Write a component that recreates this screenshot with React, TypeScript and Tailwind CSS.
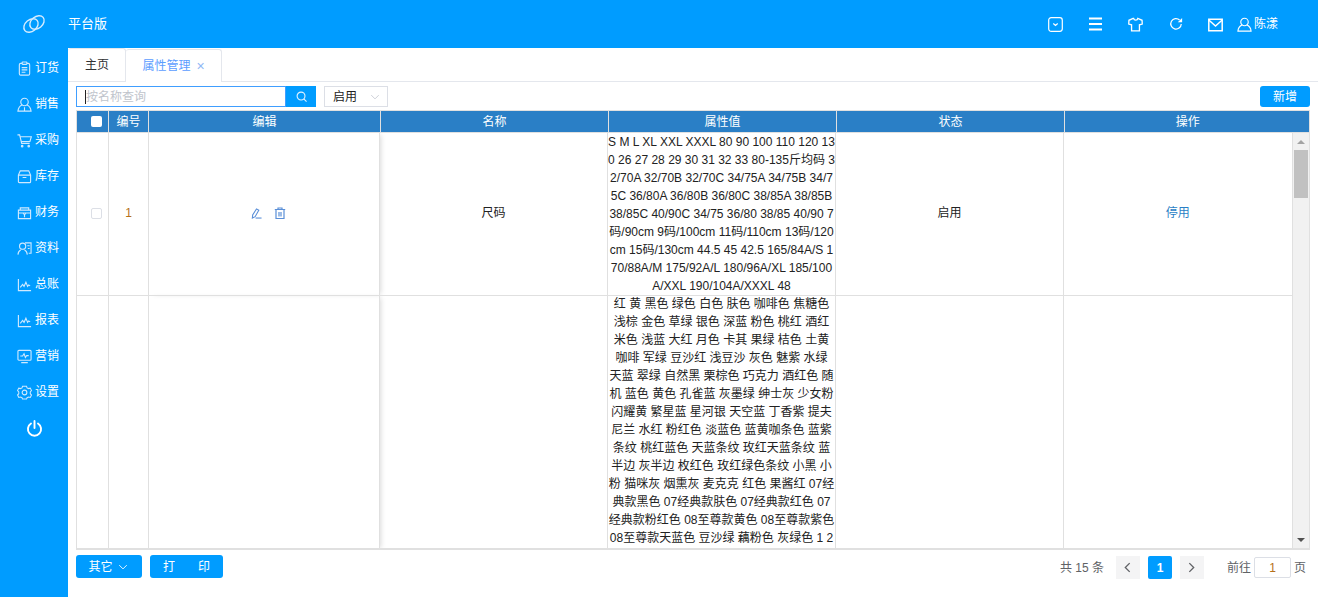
import React from "react";

const FONT = '"Liberation Sans", "Noto Sans CJK SC", sans-serif';

type IconProps = { className?: string };
const S = ({ children, className, box = 16 }: { children: React.ReactNode; className?: string; box?: number }) => (
  <svg viewBox={`0 0 ${box} ${box}`} fill="none" stroke="currentColor" strokeWidth="1.2" className={className}>
    {children}
  </svg>
);

const Order = ({ className }: IconProps) => (
  <S className={className}>
    <rect x="2.500" y="2.500" width="11" height="12.500" rx="1.500" />
    <rect x="5.500" y="1" width="5" height="2.600" rx="0.600" fill="#009cff" />
    <path d="M5 7h6M5 9.500h6M5 12h4" />
  </S>
);
const Person = ({ className }: IconProps) => (
  <S className={className}>
    <circle cx="8" cy="5.300" r="4" />
    <path d="M5.300 8.500C3 9.500 1.500 11 1 15h14c-.5-4-2-5.500-4.300-6.500M8 11v4" />
  </S>
);
const UserTop = ({ className }: IconProps) => (
  <S className={className}>
    <circle cx="8" cy="5.300" r="4" />
    <path d="M5.300 8.500C3 9.500 1.300 11.500 1 15h14c-.3-3.500-2-5.500-4.300-6.500" />
  </S>
);
const Cart = ({ className }: IconProps) => (
  <S className={className}>
    <path d="M0.500 2h2.300l2.200 9h8.500M3.300 4h12l-1.500 5H5" />
    <circle cx="5.500" cy="14" r="0.800" />
    <circle cx="12.500" cy="14" r="0.800" />
  </S>
);
const Box = ({ className }: IconProps) => (
  <S className={className}>
    <path d="M3.500 2h9l2 4.500v7a1 1 0 0 1-1 1h-11a1 1 0 0 1-1-1v-7zM1.500 6.500h13M6 9h4" />
  </S>
);
const Finance = ({ className }: IconProps) => (
  <S className={className}>
    <path d="M3.500 3h9v2.500h-9zM1.500 5.500h13v9h-13zM1.500 8.500h13" />
    <path d="M6.500 8.500 8 10.500l1.500-2M8 10.500V13" />
  </S>
);
const Data = ({ className }: IconProps) => (
  <S className={className}>
    <circle cx="6" cy="5.500" r="3.300" />
    <path d="M1 14.500c.3-3 1.700-4.500 3-5M8 9.500c1.300.500 2.700 2 3 5M8.500 2H15v11h-2.500M11 5h2.500M11.500 8H13.500" />
  </S>
);
const Chart = ({ className }: IconProps) => (
  <S className={className}>
    <path d="M1.500 2v12.500H15" />
    <path d="M3.500 11l2.500-3 1.500 2 2-4.500 1.800 4.500 1.200-1.500 1.500 1" />
  </S>
);
const Screen = ({ className }: IconProps) => (
  <S className={className}>
    <rect x="1" y="1.500" width="14" height="10.500" rx="1" />
    <path d="M3.500 7.500h2.500L7.500 5l1.500 4 1.300-2h2.200M4.500 14.500h7" />
  </S>
);
const Gear = ({ className }: IconProps) => (
  <S className={className}>
    <path d="M5.700 1.500h4.600l.6 1.800 1.800.8 1.900-.5 1.400 2.800-1.400 1.600v2l1.400 1.500-1.400 2.800-1.900-.5-1.800.8-.6 1.400H5.700l-.6-1.400-1.800-.8-1.900.5L0 11.500 1.400 10V8L0 6.400l1.400-2.800 1.900.5 1.800-.8z" transform="translate(0.600 0) scale(0.930)" />
    <circle cx="8" cy="8" r="2.500" />
  </S>
);
const Power = ({ className }: IconProps) => (
  <S className={className}>
    <g strokeWidth="1.800" strokeLinecap="round">
      <path d="M4.700 3.300a6.200 6.200 0 1 0 6.600 0" />
      <path d="M8 1v6.500" />
    </g>
  </S>
);
const Logo = ({ className }: IconProps) => (
  <svg viewBox="0 0 24 20" fill="none" stroke="currentColor" strokeWidth="1.400" className={className}>
    <ellipse cx="9" cy="11.500" rx="8" ry="5.800" transform="rotate(-40 9 11.500)" />
    <ellipse cx="15" cy="8.500" rx="8" ry="5.800" transform="rotate(-40 15 8.500)" />
  </svg>
);
const SmileBox = ({ className }: IconProps) => (
  <S className={className} box={15}>
    <rect x="0.700" y="0.700" width="13.600" height="13.600" rx="2.500" />
    <path d="M5.300 6.500 7.500 8.500 9.700 6.500" />
  </S>
);
const Menu = ({ className }: IconProps) => (
  <svg viewBox="0 0 13 14" fill="none" stroke="currentColor" strokeWidth="1.800" className={className}>
    <path d="M0 1.500h13M0 7h13M0 12.500h13" />
  </svg>
);
const Shirt = ({ className }: IconProps) => (
  <S className={className}>
    <path d="M5.500 1.500 1 3.500.8 7.500l3 .8v6.500h8.400V8.300l3-.8-.2-4-4.500-2c-.5 2.500-4 2.500-4.500 0z" strokeWidth="1.400" />
  </S>
);
const Refresh = ({ className }: IconProps) => (
  <S className={className}>
    <path d="M14 8a6 6 0 1 1-1.900-4.600" strokeWidth="1.400" />
    <path d="M15 1v5h-5z" fill="currentColor" stroke="none" />
  </S>
);
const Mail = ({ className }: IconProps) => (
  <svg viewBox="0 0 15 14" fill="none" stroke="currentColor" strokeWidth="1.500" className={className}>
    <path d="M.8 1.300h13.400v11.400H.8z" />
    <path d="M.8 2 7.500 8l6.700-6" />
  </svg>
);
const Pen = ({ className }: IconProps) => (
  <S className={className} box={12}>
    <path d="M6 1.500 8.500 3 4.500 10 1.500 11.500 1.800 8z" />
    <path d="M5 11.500H11.500" />
  </S>
);
const Trash = ({ className }: IconProps) => (
  <S className={className} box={12}>
    <path d="M.8 2.500h10.400M4 2.500V1h4v1.500M2 2.500V11.500h8V2.500M5 5v4.500M7 5v4.500" />
  </S>
);
const Search = ({ className }: IconProps) => (
  <S className={className} box={12}>
    <circle cx="5.500" cy="5.500" r="4.300" strokeWidth="1.200" />
    <path d="m8.500 8.500 3 3" strokeWidth="1.200" />
  </S>
);
const Chevron = ({ className }: IconProps) => (
  <svg viewBox="0 0 12 8" fill="none" stroke="currentColor" strokeWidth="1.200" className={className}>
    <path d="M1 1.500 6 6.500l5-5" />
  </svg>
);
const ArrowL = ({ className }: IconProps) => (
  <svg viewBox="0 0 8 12" fill="none" stroke="currentColor" strokeWidth="1.500" className={className}>
    <path d="M6.500 1 1.500 6l5 5" />
  </svg>
);
const ArrowR = ({ className }: IconProps) => (
  <svg viewBox="0 0 8 12" fill="none" stroke="currentColor" strokeWidth="1.500" className={className}>
    <path d="M1.500 1l5 5-5 5" />
  </svg>
);

const NAV: [React.FC<IconProps>, string][] = [
  [Order, "订货"],
  [Person, "销售"],
  [Cart, "采购"],
  [Box, "库存"],
  [Finance, "财务"],
  [Data, "资料"],
  [Chart, "总账"],
  [Chart, "报表"],
  [Screen, "营销"],
  [Gear, "设置"],
];

const SIZES =
  "S M L XL XXL XXXL 80 90 100 110 120 130 26 27 28 29 30 31 32 33 80-135斤均码 32/70A 32/70B 32/70C 34/75A 34/75B 34/75C 36/80A 36/80B 36/80C 38/85A 38/85B 38/85C 40/90C 34/75 36/80 38/85 40/90 7码/90cm 9码/100cm 11码/110cm 13码/120cm 15码/130cm 44.5 45 42.5 165/84A/S 170/88A/M 175/92A/L 180/96A/XL 185/100A/XXL 190/104A/XXXL 48";
const COLORS =
  "红 黄 黑色 绿色 白色 肤色 咖啡色 焦糖色 浅棕 金色 草绿 银色 深蓝 粉色 桃红 酒红 米色 浅蓝 大红 月色 卡其 果绿 桔色 土黄 咖啡 军绿 豆沙红 浅豆沙 灰色 魅紫 水绿 天蓝 翠绿 自然黑 栗棕色 巧克力 酒红色 随机 蓝色 黄色 孔雀蓝 灰墨绿 绅士灰 少女粉 闪耀黄 繁星蓝 星河银 天空蓝 丁香紫 提夫尼兰 水红 粉红色 淡蓝色 蓝黄咖条色 蓝紫条纹 桃红蓝色 天蓝条纹 玫红天蓝条纹 蓝半边 灰半边 枚红色 玫红绿色条纹 小黑 小粉 猫咪灰 烟熏灰 麦克克 红色 果酱红 07经典款黑色 07经典款肤色 07经典款红色 07经典款粉红色 08至尊款黄色 08至尊款紫色 08至尊款天蓝色 豆沙绿 藕粉色 灰绿色 1 2";

const HEAD_TH = "border-l border-[#e0e0e0] font-normal text-white text-xs h-[21px] p-0 text-center";

export default function App() {
  const td = "border-l border-b border-[#e0e0e0] p-0 pb-[2px] text-center align-middle";
  const tdLast = "border-l border-[#e0e0e0] p-0 text-center align-top h-[254px]";
  return (
    <div className="w-[1318px] h-[597px] overflow-hidden flex flex-col bg-white text-xs text-[#222]" style={{ fontFamily: FONT }}>
      {/* Top bar */}
      <header className="h-[48px] shrink-0 bg-[#009cff] flex items-center text-white">
        <div className="w-[68px] flex justify-center">
          <Logo className="w-[24px] h-[20px] text-[#d5ecff]" />
        </div>
        <span className="text-[13px] -mt-[1px]">平台版</span>
        <div className="ml-auto flex items-center pr-[40px]">
          <SmileBox className="w-[15px] h-[15px]" />
          <Menu className="w-[13px] h-[14px] ml-[26px]" />
          <Shirt className="w-[15px] h-[15px] ml-[26px]" />
          <Refresh className="w-[14px] h-[14px] ml-[26px]" />
          <Mail className="w-[15px] h-[14px] ml-[25px] mt-[2px]" />
          <UserTop className="w-[15px] h-[15px] ml-[14px]" />
          <span className="ml-[2px] text-xs">陈漾</span>
        </div>
      </header>

      <div className="flex flex-1 min-h-0">
        {/* Side navigation */}
        <nav className="w-[68px] shrink-0 bg-[#009cff] text-white pt-[2px]">
          {NAV.map(([Icon, label]) => (
            <div key={label} className="h-[36px] flex items-center pl-[17px]">
              <Icon className="w-[15px] h-[15px] text-[#cfe9ff]" />
              <span className="ml-[3px] text-xs">{label}</span>
            </div>
          ))}
          <div className="h-[36px] flex items-center justify-center">
            <Power className="w-[17px] h-[17px]" />
          </div>
        </nav>

        {/* Main area */}
        <main className="flex-1 min-w-0 flex flex-col">
          {/* Tabs */}
          <div className="h-[34px] shrink-0 flex items-end border-b border-[#e4e7ed]">
            <div className="w-[58px] h-[33px] flex items-center justify-center border-r border-t border-[#e4e7ed] rounded-t-[3px] text-[#303133] pl-[1px]">主页</div>
            <div className="w-[96px] h-[33px] -mb-[1px] flex items-center justify-center border-r border-t border-[#e4e7ed] bg-white rounded-t-[3px] text-[#5c9dff]">
              <span>属性管理</span>
              <span className="ml-[6px] text-[#8fb8f5] text-[14px] leading-none">×</span>
            </div>
          </div>

          {/* Toolbar */}
          <div className="h-[28px] shrink-0 flex items-start pt-[4px] px-[8px]">
            <div className="w-[210px] h-[21px] border border-[#409eff] flex items-center pl-[8px] text-[#c0c4cc]">
              <span className="border-l border-[#222] leading-[14px]">按名称查询</span>
            </div>
            <div className="w-[30px] h-[21px] bg-[#009cff] flex items-center justify-center text-[#e0f2ff]">
              <Search className="w-[11px] h-[11px]" />
            </div>
            <div className="ml-[8px] w-[64px] h-[21px] border border-[#dcdfe6] flex items-center pl-[8px] text-[#222]">
              启用
              <Chevron className="w-[10px] h-[6px] ml-[13px] text-[#c8ccd4]" />
            </div>
            <div className="ml-auto w-[50px] h-[21px] rounded-[3px] bg-[#009cff] text-white flex items-center justify-center text-xs">新增</div>
          </div>

          {/* Table */}
          <div className="mx-[8px] h-[440px] shrink-0 flex flex-col border-t border-r border-b-2 border-[#e0e0e0] overflow-hidden">
            <table className="w-[1234px] table-fixed border-collapse shrink-0">
              <colgroup>
                <col className="w-[32px]" />
                <col className="w-[40px]" />
                <col className="w-[232px]" />
                <col className="w-[228px]" />
                <col className="w-[228px]" />
                <col className="w-[228px]" />
                <col className="w-[246px]" />
              </colgroup>
              <thead>
                <tr className="bg-[#2a7fc6]">
                  <th className={HEAD_TH}>
                    <span className="inline-block w-[11px] h-[11px] ml-[8px] -translate-y-[1px] bg-white rounded-[2px] align-middle" />
                  </th>
                  {["编号", "编辑", "名称", "属性值", "状态", "操作"].map((h) => (
                    <th key={h} className={HEAD_TH}>{h}</th>
                  ))}
                </tr>
              </thead>
            </table>
            <div className="flex-1 min-h-0 flex border-t border-[#e0e0e0] overflow-hidden">
              <table className="w-[1215px] h-fit table-fixed border-collapse shrink-0">
                <colgroup>
                  <col className="w-[32px]" />
                  <col className="w-[40px]" />
                  <col className="w-[231px]" />
                  <col className="w-[228px]" />
                  <col className="w-[228px]" />
                  <col className="w-[228px]" />
                  <col className="w-[228px]" />
                </colgroup>
                <tbody>
                  <tr>
                    <td className={td}>
                      <span className="inline-block w-[11px] h-[11px] ml-[8px] border border-[#dcdfe6] rounded-[2px] align-middle" />
                    </td>
                    <td className={`${td} text-[#b5701a]`}>1</td>
                    <td className={`${td} shadow-[3px_0_5px_-2px_rgba(0,0,0,0.15)]`}>
                      <div className="flex justify-center items-center gap-[12px] text-[#5a8fd8] pl-[9px]">
                        <Pen className="w-[11px] h-[12px]" />
                        <Trash className="w-[12px] h-[12px]" />
                      </div>
                    </td>
                    <td className={td}>尺码</td>
                    <td className="border-l border-b border-[#e0e0e0] p-0 text-center align-middle leading-[18px] break-all">{SIZES}</td>
                    <td className={td}>启用</td>
                    <td className={`${td} text-[#2a7fc6]`}>停用</td>
                  </tr>
                  <tr>
                    <td className={tdLast}></td>
                    <td className={tdLast}></td>
                    <td className={`${tdLast} shadow-[3px_0_5px_-2px_rgba(0,0,0,0.15)]`}></td>
                    <td className={tdLast}></td>
                    <td className={`${tdLast} leading-[18px] break-all`}>
                      <div className="-mt-[1px]">{COLORS}</div>
                    </td>
                    <td className={tdLast}></td>
                    <td className={tdLast}></td>
                  </tr>
                </tbody>
              </table>
              {/* Scrollbar */}
              <div className="w-[18px] shrink-0 bg-[#f1f1f1] border-l border-[#e0e0e0] flex flex-col items-center">
                <div className="h-[17px] flex items-center justify-center">
                  <div className="w-0 h-0 border-x-[4px] border-x-transparent border-b-[4px] border-b-[#a3a3a3]" />
                </div>
                <div className="w-[14px] h-[48px] bg-[#c1c1c1]" />
                <div className="mt-auto h-[17px] flex items-center justify-center">
                  <div className="w-0 h-0 border-x-[4px] border-x-transparent border-t-[4px] border-t-[#505050]" />
                </div>
              </div>
            </div>
          </div>

          {/* Footer */}
          <div className="flex-1 flex items-start pt-[5px] pl-[8px] pr-[12px]">
            <div className="w-[66px] h-[23px] pr-[2px] rounded-[3px] bg-[#009cff] text-white text-xs flex items-center justify-center">
              其它
              <Chevron className="w-[10px] h-[6px] ml-[5px]" />
            </div>
            <div className="ml-[8px] w-[73px] h-[23px] rounded-[3px] bg-[#009cff] text-white text-xs flex items-center justify-center gap-[23px]">
              <span>打</span>
              <span>印</span>
            </div>
            <div className="ml-auto mt-[1px] flex items-center text-[#606266] h-[23px]">
              <span>共 15 条</span>
              <div className="ml-[12px] w-[24px] h-[23px] bg-[#f4f4f5] flex items-center justify-center text-[#606266]">
                <ArrowL className="w-[7px] h-[11px]" />
              </div>
              <div className="ml-[8px] w-[24px] h-[23px] bg-[#009cff] rounded-[2px] text-white font-bold flex items-center justify-center">1</div>
              <div className="ml-[8px] w-[24px] h-[23px] bg-[#f4f4f5] flex items-center justify-center text-[#606266]">
                <ArrowR className="w-[7px] h-[11px]" />
              </div>
              <span className="ml-[23px]">前往</span>
              <div className="ml-[3px] w-[37px] h-[21px] border border-[#dcdfe6] rounded-[2px] flex items-center justify-center text-[#b5701a]">1</div>
              <span className="ml-[3px]">页</span>
            </div>
          </div>
        </main>
      </div>
    </div>
  );
}
